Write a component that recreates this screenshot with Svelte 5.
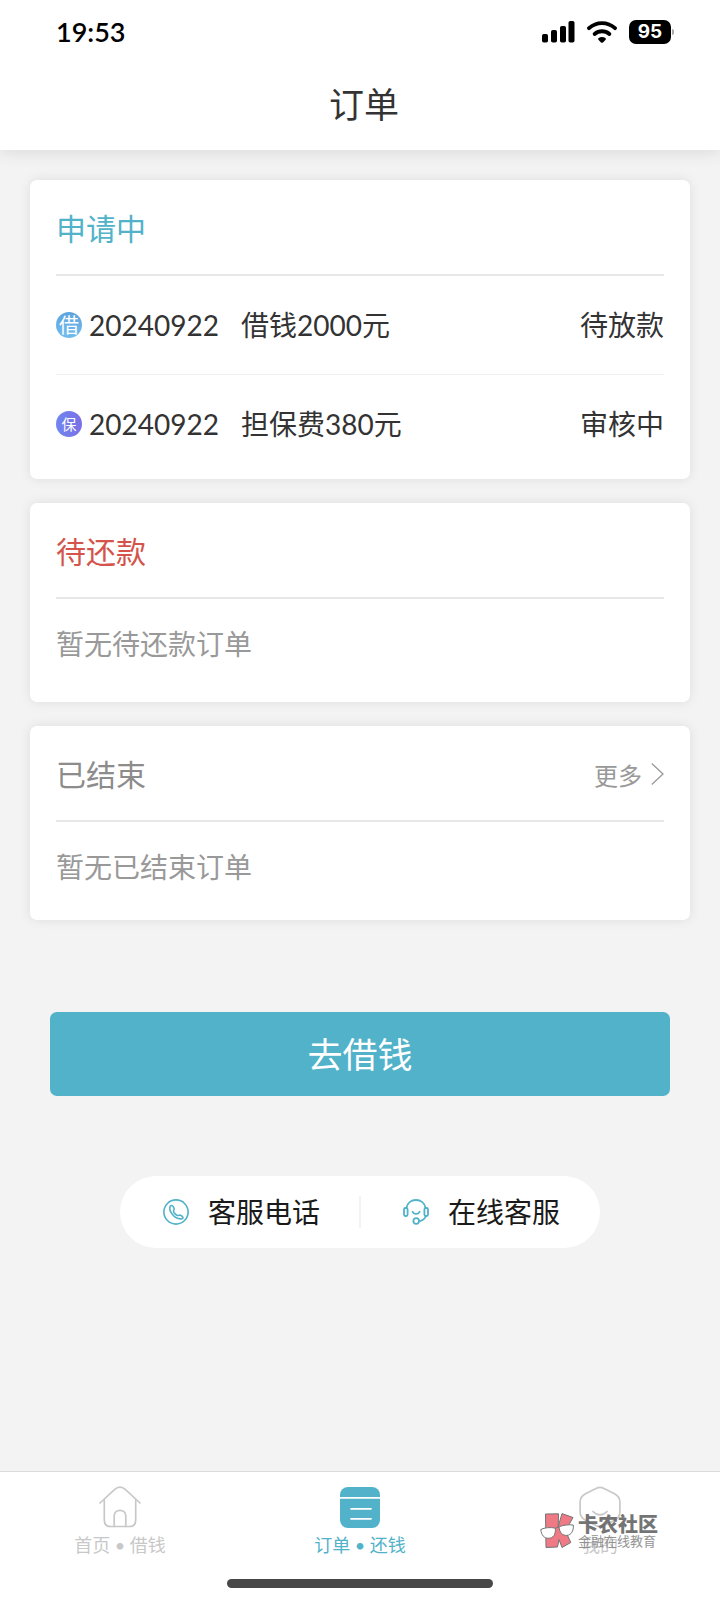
<script>
  const pending = [
    { kind: 'loan', mark: '借', date: '20240922', title: '借钱2000元', status: '待放款' },
    { kind: 'guarantee', mark: '保', date: '20240922', title: '担保费380元', status: '审核中' },
  ];

  let active = $state('orders');
</script>

<div class="screen">
  <header>
    <div class="status-bar">
      <span class="time">19:53</span>
      <div class="indicators">
        <svg width="33" height="22" viewBox="0 0 33 22" aria-hidden="true">
          <rect x="0" y="13" width="6" height="8.5" rx="1.8" />
          <rect x="9" y="9" width="6" height="12.5" rx="1.8" />
          <rect x="18" y="5" width="6" height="16.5" rx="1.8" />
          <rect x="26.5" y="0" width="6" height="21.5" rx="1.8" />
        </svg>
        <svg width="30" height="22" viewBox="0 0 30 22" aria-hidden="true">
          <path d="M2 7.2C9.4.4 20.6.4 28 7.2" fill="none" stroke="#000" stroke-width="3.8" stroke-linecap="round" />
          <path d="M7.6 13C11.9 9.3 18.1 9.3 22.4 13" fill="none" stroke="#000" stroke-width="3.8" stroke-linecap="round" />
          <path d="M11.4 17.2c2-1.7 5.2-1.7 7.2 0 .5.5.5 1 0 1.5l-2.6 2.7c-.6.6-1.4.6-2 0l-2.6-2.7c-.5-.5-.5-1 0-1.5z" />
        </svg>
        <div class="battery"><span>95</span></div>
      </div>
    </div>
    <h1>订单</h1>
  </header>

  <main>
    <section class="card applying">
      <div class="card-head">
        <h2>申请中</h2>
      </div>
      <ul>
        {#each pending as order}
          <li>
            <span class="mark {order.kind}">{order.mark}</span>
            <span class="date">{order.date}</span>
            <span class="title">{order.title}</span>
            <span class="state">{order.status}</span>
          </li>
        {/each}
      </ul>
    </section>

    <section class="card due">
      <div class="card-head">
        <h2>待还款</h2>
      </div>
      <p class="empty">暂无待还款订单</p>
    </section>

    <section class="card ended">
      <div class="card-head">
        <h2>已结束</h2>
        <a class="more" href="#more">
          更多
          <svg width="13" height="22" viewBox="0 0 13 22" fill="none" stroke="#999" stroke-width="1.3" aria-hidden="true">
            <path d="M.8.6 12 11 .8 21.4" />
          </svg>
        </a>
      </div>
      <p class="empty">暂无已结束订单</p>
    </section>

    <button class="borrow">去借钱</button>

    <div class="service">
      <a href="#phone">
        <svg width="26" height="26" viewBox="0 0 26 26" fill="none" stroke="#51b2c9" stroke-width="1.6" aria-hidden="true">
          <circle cx="13" cy="13" r="12.1" />
          <path d="M7.1 7.3c1-1.2 2.4-1.1 3 .1l.9 1.9c.4.9.2 1.6-.3 2.2-.4.6-.3 1.2.2 2 1 1.5 2.1 2.4 3.4 2.9.7.2 1.2.1 1.700-.1.6-.3 1.2-.3 1.800.1l1.600 1.1c1 .8.8 1.900-.5 2.200-3.200.6-6.600-.8-9.200-3.900-2.400-2.800-3.500-5.600-2.600-8.500z" stroke-linejoin="round" />
        </svg>
        客服电话
      </a>
      <a href="#online">
        <svg width="26" height="26" viewBox="0 0 26 26" fill="none" stroke="#51b2c9" stroke-width="1.8" aria-hidden="true">
          <path d="M3.3 9C4.3 4 8.2 1 13 1s8.700 3 9.700 8" />
          <rect x="1" y="9" width="3.6" height="8" rx="1.4" />
          <rect x="21.4" y="9" width="3.6" height="8" rx="1.4" />
          <path d="M22.9 17c-.9 3-3.300 4.600-6.900 5.300" />
          <circle cx="13.2" cy="22" r="2.8" />
          <path d="M9.6 12.800c1.500 2.800 5.500 2.800 7 0" stroke-linecap="round" />
        </svg>
        在线客服
      </a>
    </div>
  </main>

  <nav>
    <div class="tabs">
      <button class="tab" class:active={active === 'home'} onclick={() => (active = 'home')}>
        <svg width="42" height="42" viewBox="0 0 42 42" fill="none" stroke="currentColor" stroke-width="1.7" stroke-linecap="round" aria-hidden="true">
          <path d="M1 17 15.5 3.600c3.600-3.200 7.400-3.200 11 0L41 17" />
          <path d="M5.3 13.500V34c0 4.300 2 6.500 6 6.500h19.400c4 0 6-2.200 6-6.500V13.500" />
          <path d="M15.2 40.500V30c0-7.600 11.600-7.600 11.600 0v10.500" />
        </svg>
        <span>首页 • 借钱</span>
      </button>
      <button class="tab" class:active={active === 'orders'} onclick={() => (active = 'orders')}>
        <svg width="42" height="42" viewBox="0 0 42 42" aria-hidden="true">
          <rect x="1" y="1" width="40" height="41" rx="8" fill="currentColor" />
          <path d="M1 11.800h40" stroke="#fff" stroke-width="1.8" />
          <path d="M12 22.800h20M12 32.800h20" stroke="#fff" stroke-width="1.8" stroke-linecap="round" />
        </svg>
        <span>订单 • 还钱</span>
      </button>
      <button class="tab" class:active={active === 'mine'} onclick={() => (active = 'mine')}>
        <svg width="42" height="42" viewBox="0 0 42 42" fill="none" stroke="currentColor" stroke-width="1.7" stroke-linecap="round" aria-hidden="true">
          <path d="M17.5 2.200c2.500-1.300 4.500-1.300 7 0l11 5.600c3.500 1.900 5.400 4.400 5.400 8.200v10c0 3.800-1.900 6.300-5.400 8.200l-11 5.600c-2.500 1.300-4.500 1.300-7 0l-11-5.600C3 32.300 1.100 29.800 1.100 26V16c0-3.800 1.900-6.300 5.400-8.200z" />
          <path d="M14 25.500c4 4.500 10 4.500 14 0" />
        </svg>
        <span>我的</span>
      </button>
    </div>
    <div class="home-indicator"></div>

    <div class="community">
      <svg width="34" height="36" viewBox="0 0 34 36" stroke="#666" stroke-width="1" stroke-linejoin="round" aria-hidden="true">
        <path d="M5.500 1 18.500.8l-.3 12.700L22 .6 33 4.500 25.500 18l5.300 11.500-8.800 5-3-8-1.500 7.500L6 34.500z" fill="#ee6c78" />
        <path d="M.8 16.500c4-2 9.500-2.400 14.500-1.400.6 6.200-1.800 10.200-6.800 10.200-4.500 0-7.200-3.200-7.700-8.800z" fill="#fff" />
        <path d="M19 13.800c4.500-1.800 9.500-2.400 14.300-1.800.4 6-2 10-6.400 10.400-4.500.3-7.400-2.800-7.900-8.600z" fill="#fff" />
        <path d="M15.300 15.500c1-.9 2.400-1.300 3.700-1.100" fill="none" />
      </svg>
      <div>
        <strong>卡农社区</strong>
        <small>金融在线教育</small>
      </div>
    </div>
  </nav>
</div>

<style>
  :global(body) {
    background: #f3f3f3;
  }

  .screen {
    display: flex;
    flex-direction: column;
    min-height: 100vh;
    font-family: Lato, 'Noto Sans CJK SC', sans-serif;
    color: #333;
  }

  h1,
  h2,
  p,
  ul {
    margin: 0;
    padding: 0;
    font-weight: 400;
  }

  a {
    color: inherit;
    text-decoration: none;
  }

  button {
    border: 0;
    padding: 0;
    font: inherit;
    cursor: pointer;
  }

  svg {
    display: block;
    flex: none;
  }

  header {
    background: #fff;
    box-shadow: 0 0 18px rgba(0, 0, 0, 0.13);
  }

  .status-bar {
    display: flex;
    align-items: center;
    justify-content: space-between;
    height: 64px;
    padding: 0 49px 0 56px;
    color: #000;
  }

  .time {
    font-size: 27px;
    font-weight: 600;
    line-height: 32px;
  }

  .indicators {
    display: flex;
    align-items: center;
    gap: 12px;
  }

  .battery {
    position: relative;
    width: 42px;
    height: 24px;
    border-radius: 7px;
    background: #000;
    color: #fff;
    font-family: Inter, sans-serif;
    font-size: 19px;
    font-weight: 700;
    line-height: 24px;
    text-align: center;
  }

  .battery::after {
    content: '';
    position: absolute;
    top: 9px;
    right: -3px;
    width: 2px;
    height: 6px;
    border-radius: 0 2px 2px 0;
    background: #aaa;
  }

  h1 {
    padding-left: 8px;
    height: 86px;
    font-size: 35px;
    line-height: 80px;
    text-align: center;
  }

  main {
    display: flex;
    flex-direction: column;
    gap: 24px;
    padding: 30px 30px 40px;
  }

  .card {
    padding: 0 26px;
    border-radius: 7px;
    background: #fff;
    box-shadow: 0 0 12px rgba(0, 0, 0, 0.09);
  }

  .card-head {
    display: flex;
    align-items: center;
    justify-content: space-between;
    height: 94px;
    border-bottom: 2px solid #e7e7e7;
  }

  h2 {
    font-size: 30px;
  }

  .applying {
    padding-bottom: 6px;
  }

  .applying h2 {
    color: #51b2c9;
  }

  .due {
    padding-bottom: 13px;
  }

  .due h2 {
    color: #d4544c;
  }

  .ended {
    padding-bottom: 8px;
  }

  .ended h2 {
    color: #8c8c8c;
  }

  ul {
    list-style: none;
  }

  li {
    display: flex;
    align-items: center;
    height: 98px;
    font-size: 28px;
    line-height: 40px;
  }

  li + li {
    border-top: 1px solid #efefef;
  }

  .mark {
    width: 26px;
    height: 26px;
    margin-right: 7px;
    border-radius: 50%;
    color: #fff;
    line-height: 26px;
    text-align: center;
  }

  .loan {
    background: linear-gradient(#5fa3dc, #72bdf0);
    font-size: 20px;
  }

  .guarantee {
    background: linear-gradient(90deg, #6f86ee, #7a70e6);
    font-size: 15px;
  }

  .date {
    margin-right: 22px;
  }

  .state {
    margin-left: auto;
  }

  .empty {
    color: #999;
    font-size: 28px;
    line-height: 90px;
  }

  .more {
    display: flex;
    align-items: center;
    gap: 9px;
    padding-top: 2px;
    color: #999;
    font-size: 24px;
  }

  .borrow {
    margin: 68px 20px 0;
    padding-bottom: 4px;
    height: 84px;
    border-radius: 7px;
    background: #51b2c9;
    color: #fff;
    font-size: 35px;
  }

  .service {
    position: relative;
    display: flex;
    align-self: center;
    width: 480px;
    max-width: 100%;
    margin-top: 56px;
    border-radius: 36px;
    background: #fff;
    color: #1a1a1a;
    font-size: 28px;
    line-height: 40px;
  }

  .service a {
    display: flex;
    flex: 1;
    align-items: center;
    justify-content: center;
    gap: 19px;
    height: 72px;
    padding: 0 0 0 3px;
  }

  .service::before {
    content: '';
    position: absolute;
    top: 20px;
    left: calc(50% - 1px);
    width: 2px;
    height: 32px;
    background: #f3f3f3;
  }

  nav {
    position: relative;
    margin-top: auto;
    padding-bottom: 12px;
    border-top: 1px solid #dcdcdc;
    background: #fff;
  }

  .tabs {
    display: flex;
    height: 107px;
  }

  .tab {
    display: flex;
    flex: 1;
    flex-direction: column;
    align-items: center;
    padding-top: 14px;
    background: none;
    color: #c8c8c8;
    font-size: 18px;
    line-height: 34px;
  }

  .tab.active {
    color: #51b2c9;
  }

  .home-indicator {
    width: 266px;
    height: 9px;
    margin: 0 auto;
    border-radius: 5px;
    background: #484848;
  }

  .community {
    position: absolute;
    top: 41px;
    right: 62px;
    display: flex;
    align-items: center;
    gap: 4px;
    opacity: 0.9;
    pointer-events: none;
  }

  .community strong,
  .community small {
    display: block;
  }

  .community strong {
    color: #666;
    font-size: 20px;
    font-weight: 900;
    line-height: 20px;
  }

  .community small {
    color: #888;
    font-size: 13px;
    line-height: 14px;
  }
</style>
